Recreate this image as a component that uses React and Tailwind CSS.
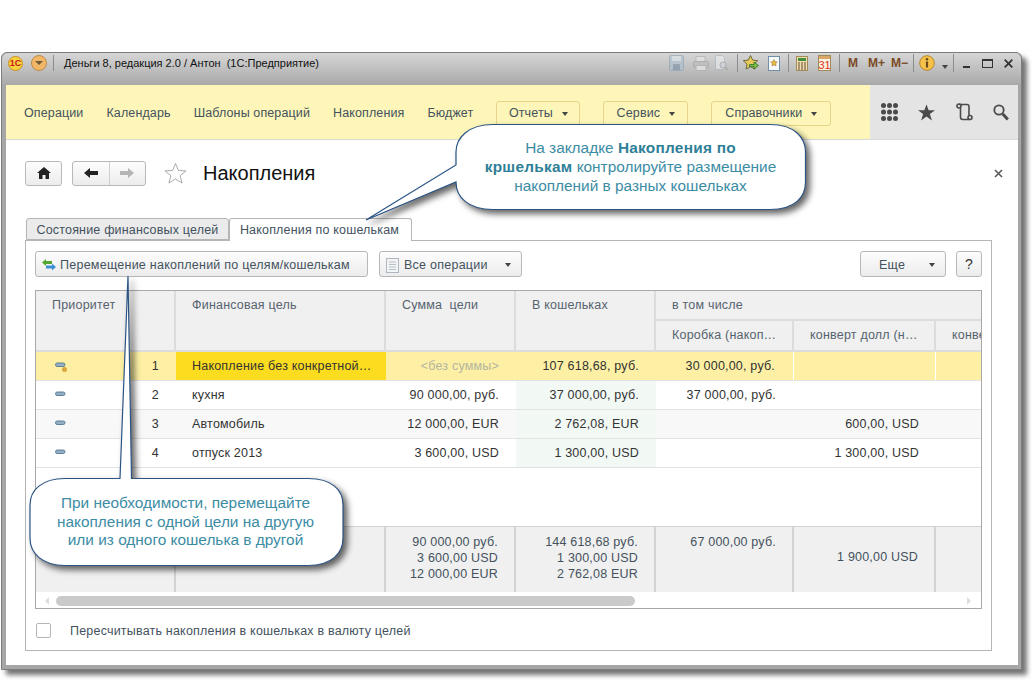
import React from "react";

const arial = "font-['Liberation_Sans',Arial,sans-serif]";

function Caret({ className = "" }) {
  return <span className={`inline-block w-0 h-0 border-x-[3px] border-x-transparent border-t-[4px] border-t-[#444] ${className}`} />;
}

function Sep({ className = "" }) {
  return <span className={`w-px h-[18px] bg-[#8d8d8d] ${className}`} />;
}

function TitleIcons() {
  return (
    <div className="flex items-center h-[24px] text-[#7b4a24]">
      {/* save / print / preview, greyed out */}
      <svg width="60" height="16" viewBox="0 0 60 16" className="opacity-55">
        <rect x=".5" y=".5" width="14" height="15" rx="1" fill="#a9c0d2" stroke="#7f9bb0" />
        <rect x="3" y="1" width="9" height="5" fill="#dfe8ee" />
        <rect x="4" y="9" width="7" height="6" fill="#6f8ba0" />
        <rect x="27" y="1.500" width="9" height="5" fill="#eee" stroke="#aaa" />
        <rect x="24.500" y="6.500" width="15" height="6" rx="1" fill="#b9b9b9" stroke="#999" />
        <rect x="27" y="10.500" width="10" height="5" fill="#f3f3f3" stroke="#aaa" />
        <path d="M46.500 .5h7l2 2v12h-9z" fill="#eef2f5" stroke="#a5b4c0" />
        <circle cx="54" cy="10" r="3" fill="#dde" stroke="#999" />
        <path d="M56 12l3 3" stroke="#999" strokeWidth="1.500" />
      </svg>
      <Sep className="ml-[8px] mr-[5px]" />
      <svg width="16" height="16" viewBox="0 0 16 16">
        <path d="M7.500 .5l2.200 4.600 5 .6-3.700 3.400.9 5L7.500 11.700 3.100 14.100l.9-5L.3 5.700l5-.6z" fill="#e8c95c" stroke="#6d6a3a" />
        <path d="M6.500 9.500h4.500V7l4.500 3.500L11 14v-2.500H6.500z" fill="#7cc242" stroke="#2f6f2a" strokeWidth=".8" />
      </svg>
      <svg width="12" height="15" viewBox="0 0 12 15" className="ml-[9px]">
        <rect x=".5" y=".5" width="11" height="14" fill="#f7f9fb" stroke="#6f8fa8" />
        <path d="M6 3.500l1 2.200 2.400.3-1.800 1.600.5 2.400L6 8.800l-2.100 1.200.5-2.400L2.600 6l2.400-.3z" fill="#e9b93c" stroke="#8a6d25" strokeWidth=".5" />
      </svg>
      <Sep className="ml-[8px] mr-[7px]" />
      <svg width="12" height="15" viewBox="0 0 12 15">
        <rect x=".5" y=".5" width="11" height="14" fill="#f3dcae" stroke="#a08a5a" />
        <rect x="2" y="2" width="8" height="3" fill="#3f8f3f" />
        <path d="M2 7h2M5 7h2M8 7h2M2 9h2M5 9h2M8 9h2M2 11h2M5 11h2M8 11h2M2 13h2M5 13h2M8 13h2" stroke="#5a4a30" />
      </svg>
      <svg width="13" height="16" viewBox="0 0 13 16" className="ml-[10px]">
        <rect x=".5" y=".5" width="12" height="15" fill="#fbf3e2" stroke="#a08a5a" />
        <rect x="1" y="1" width="11" height="3" fill="#d9a869" />
        <text x="6.500" y="14" textAnchor="middle" fontSize="11" fontFamily="Liberation Sans" fill="#e0301e">31</text>
      </svg>
      <Sep className="ml-[8px] mr-[8px]" />
      <span className="text-[12px] font-bold w-[20px]">M</span>
      <span className="text-[12px] font-bold w-[23px]">M+</span>
      <span className="text-[12px] font-bold w-[22px]">M−</span>
      <Sep className="mr-[5px]" />
      <svg width="16" height="16" viewBox="0 0 16 16">
        <circle cx="8" cy="8" r="7.300" fill="#f4c24a" stroke="#b8862b" />
        <circle cx="8" cy="4.300" r="1.300" fill="#6b4a1e" />
        <rect x="6.900" y="6.500" width="2.200" height="6" fill="#6b4a1e" />
      </svg>
      <Caret className="ml-[7px] mt-[8px]" />
      <Sep className="ml-[5px] mr-[9px]" />
      <span className="w-[7px] h-[2px] bg-[#333] mt-[7px]" />
      <span className="w-[11px] h-[9px] border border-[#333] border-t-2 ml-[12px]" />
      <svg width="9" height="9" viewBox="0 0 9 9" className="ml-[11px]">
        <path d="M.7 .7l7.600 7.600M8.300 .7L.7 8.300" stroke="#333" strokeWidth="1.800" />
      </svg>
    </div>
  );
}

function NavLink({ children, className = "" }) {
  return <span className={`pt-[1px] text-[12.5px] tracking-[0.12px] text-[#44525e] whitespace-nowrap ${className}`}>{children}</span>;
}

function NavButton({ children, w }) {
  return (
    <div className={`h-[25px] pt-[1px] flex items-center justify-center gap-[9px] border border-[#e6d489] rounded-[3px] text-[12.5px] tracking-[0.12px] text-[#44525e] ${w}`}>
      {children}
      <Caret />
    </div>
  );
}

function SideIcons() {
  return (
    <div className="flex items-center">
      <svg width="17" height="18" viewBox="0 0 17 18" className="ml-[11px]">
        {[2.600, 9, 15.400].map((y) =>
          [2.500, 8.500, 14.500].map((x) => <circle key={`${x}-${y}`} cx={x} cy={y} r="2.500" fill="#4a4a4a" />)
        )}
      </svg>
      <svg width="17" height="17" viewBox="0 0 18 17" className="ml-[20px]">
        <path d="M9 0l2.300 6H18l-5.400 4 2.100 7L9 12.800 3.300 17l2.100-7L0 6h6.700z" fill="#4a4a4a" />
      </svg>
      <svg width="17" height="18" viewBox="0 0 17 18" fill="none" stroke="#4a4a4a" strokeWidth="1.600" className="ml-[21px]">
        <path d="M3 1.500h8c1.500 0 2 1 2 2.200v8.800" />
        <path d="M4.500 4.500V14c0 1.500 1 2.500 2.200 2.500H14" />
        <circle cx="3" cy="3" r="2" />
        <circle cx="14" cy="14.500" r="2" />
      </svg>
      <svg width="16" height="17" viewBox="0 0 16 17" fill="none" stroke="#4a4a4a" className="ml-[20px]">
        <circle cx="6" cy="6" r="4.700" strokeWidth="1.800" />
        <path d="M9.800 10l5 5.500" strokeWidth="3" />
      </svg>
    </div>
  );
}

function Btn({ children, h = "h-[26px]", className = "" }) {
  return (
    <div className={`flex items-center border border-[#b8b8b8] rounded-[3px] bg-gradient-to-b from-[#fdfdfd] to-[#ececec] text-[12.5px] tracking-[0.25px] text-[#44525e] whitespace-nowrap ${h} ${className}`}>
      {children}
    </div>
  );
}

function FormHeader() {
  return (
    <div className="h-[78px] flex items-center shrink-0 pl-[19px] pr-[15px] pb-[12px]">
      <Btn h="h-[25px]" className="w-[37px] justify-center">
        <svg width="14" height="12" viewBox="0 0 14 12"><path d="M7 0L0 6h2v6h3.500V8h3v4H12V6h2z" fill="#222" /></svg>
      </Btn>
      <Btn h="h-[25px]" className="w-[74px] ml-[10px]">
        <span className="w-[37px] h-full flex items-center justify-center border-r border-[#cfcfcf]">
          <svg width="14" height="12" viewBox="0 0 14 12"><path d="M0 6l6-5v3h8v4H6v3z" fill="#222" /></svg>
        </span>
        <span className="w-[36px] flex justify-center">
          <svg width="14" height="12" viewBox="0 0 14 12"><path d="M14 6L8 1v3H0v4h8v3z" fill="#b5b5b5" /></svg>
        </span>
      </Btn>
      <svg width="23" height="22" viewBox="0 0 24 23" className="ml-[18px]">
        <path d="M12 1.500l3 7.400 8 .4-6.200 5 2.100 7.700-6.900-4.300-6.900 4.300 2.100-7.700L1 9.300l8-.4z" fill="#fff" stroke="#a5a5a5" />
      </svg>
      <span className="text-[20px] text-[#111] ml-[16px] leading-none">Накопления</span>
      <svg width="9" height="9" viewBox="0 0 9 9" className="ml-auto">
        <path d="M1 1l7 7M8 1L1 8" stroke="#555" strokeWidth="1.500" />
      </svg>
    </div>
  );
}

function Tabs() {
  return (
    <div className="flex h-[23px] ml-[1px] relative z-10 shrink-0 text-[12.5px] tracking-[0.18px] text-[#44525e]">
      <div className="w-[203px] h-[22px] pt-[2px] flex items-center justify-center bg-[#ebebeb] border border-[#b5b5b5] rounded-t-[3px]">Состояние финансовых целей</div>
      <div className="w-[183px] h-[23px] pt-[1px] pr-[2px] flex items-center justify-center bg-white border border-b-0 border-[#b5b5b5] rounded-t-[3px]">Накопления по кошелькам</div>
    </div>
  );
}

const head = "bg-[#f0f0f0] border-b-2 border-[#dcdcdc] text-[12.5px] tracking-[0.2px] text-[#56636f] whitespace-nowrap overflow-hidden";
const cell = "flex items-center pt-[1px] border-b border-[#e2e2e2] text-[12.5px] tracking-[0.2px] text-[#333] whitespace-nowrap overflow-hidden";

function PriorityIcon({ dot }) {
  return (
    <svg width="12" height="10" viewBox="0 0 12 10" className="ml-[19px]">
      <rect x=".5" y="1" width="9.500" height="3.500" rx="1.700" fill="#93afc5" stroke="#56768f" strokeWidth=".9" />
      {dot && <circle cx="9.500" cy="7.500" r="2.200" fill="#e0a93a" stroke="#b98a2c" strokeWidth=".5" />}
    </svg>
  );
}

const rows = [
  { n: 1, goal: "Накопление без конкретной…", sum: "<без суммы>", wallet: "107 618,68, руб.", a: "30 000,00, руб.", b: "" },
  { n: 2, goal: "кухня", sum: "90 000,00, руб.", wallet: "37 000,00, руб.", a: "37 000,00, руб.", b: "" },
  { n: 3, goal: "Автомобиль", sum: "12 000,00, EUR", wallet: "2 762,08, EUR", a: "", b: "600,00, USD" },
  { n: 4, goal: "отпуск 2013", sum: "3 600,00, USD", wallet: "1 300,00, USD", a: "", b: "1 300,00, USD" },
];

function Row({ r }) {
  const sel = r.n === 1;
  const bg = sel ? "bg-[#fdf0a5]" : r.n === 3 ? "bg-[#f8f8f8]" : "bg-white";
  const divider = sel ? "border-r border-r-white" : "";
  return (
    <>
      <div className={`${cell} ${bg}`}><PriorityIcon dot={sel} /></div>
      <div className={`${cell} ${bg} justify-end pr-[17px]`}>{r.n}</div>
      <div className={`${cell} pl-[16px] ${sel ? "bg-[#fcdc1f] text-[#111]" : bg}`}>{r.goal}</div>
      <div className={`${cell} ${bg} justify-end pr-[17px] ${sel ? "text-[#b4b4a0]" : ""}`}>{r.sum}</div>
      <div className={`${cell} justify-end pr-[17px] ${sel ? bg : "bg-[#f2f9f5]"}`}>{r.wallet}</div>
      <div className={`${cell} ${bg} justify-end pr-[18px] ${divider}`}>{r.a}</div>
      <div className={`${cell} ${bg} justify-end pr-[17px] ${divider}`}>{r.b}</div>
      <div className={`${cell} ${bg}`} />
    </>
  );
}

function Table() {
  const foot = "bg-[#f0f0f0] border-t border-[#d2d2d2] text-[12.5px] tracking-[0.2px] text-[#44525e] text-right pr-[16px] whitespace-nowrap";
  const line = "border-r-2";
  return (
    <div className="mt-[13px] mx-[9px] h-[320px] border border-[#a8a8a8] overflow-hidden grid grid-cols-[100px_40px_210px_130px_140px_138px_142px_45px] grid-rows-[30px_31px_29px_29px_29px_29px_58px_66px_17px]">
      <div className={`${head} ${line} col-span-2 row-span-2 pl-[16px] pt-[5px]`}>Приоритет</div>
      <div className={`${head} ${line} row-span-2 pl-[16px] pt-[5px]`}>Финансовая цель</div>
      <div className={`${head} ${line} row-span-2 pl-[16px] pt-[5px]`}>Сумма&nbsp; цели</div>
      <div className={`${head} ${line} row-span-2 pl-[16px] pt-[5px]`}>В кошельках</div>
      <div className={`${head} col-span-3 pl-[16px] flex items-center`}>в том числе</div>
      <div className={`${head} ${line} pl-[16px] flex items-center`}>Коробка (накоп…</div>
      <div className={`${head} ${line} pl-[16px] flex items-center`}>конверт долл (н…</div>
      <div className={`${head} pl-[16px] flex items-center`}>конверт</div>

      {rows.map((r) => <Row key={r.n} r={r} />)}

      <div className="col-span-8 bg-white" />

      <div className={`${foot} ${line} col-span-2`} />
      <div className={`${foot} ${line}`} />
      <div className={`${foot} ${line} flex flex-col justify-center pb-[4px] leading-[16px]`}>
        <span>90 000,00 руб.</span><span>3 600,00 USD</span><span>12 000,00 EUR</span>
      </div>
      <div className={`${foot} ${line} flex flex-col justify-center pb-[4px] leading-[16px]`}>
        <span>144 618,68 руб.</span><span>1 300,00 USD</span><span>2 762,08 EUR</span>
      </div>
      <div className={`${foot} ${line} pt-[6px]`}>67 000,00 руб.</div>
      <div className={`${foot} ${line} flex items-center justify-end pb-[4px]`}>1 900,00 USD</div>
      <div className={foot} />

      <div className="col-span-8 flex items-center bg-white pl-[9px] pr-[10px]">
        <span className="w-0 h-0 border-y-[4px] border-y-transparent border-r-[4px] border-r-[#ddd]" />
        <div className="ml-[7px] w-[579px] h-[10px] rounded-[5px] bg-[#cacaca]" />
        <span className="ml-auto w-0 h-0 border-y-[4px] border-y-transparent border-l-[4px] border-l-[#ddd]" />
      </div>
    </div>
  );
}

function Callouts() {
  return (
    <>
      <svg width="1034" height="680" className="absolute left-0 top-0 z-20 drop-shadow-[4px_4px_3px_rgba(0,0,0,0.6)]">
        <path
          d="M493 124.500H770C795 124.500 805.500 138 805.500 152V182C805.500 197 795 209.500 770 209.500H493C468 209.500 456 197 456 182L366 220L456 165V152C456 138 468 124.500 493 124.500Z"
          fill="#fff" stroke="#2a5484" strokeWidth="1.200"
        />
        <path
          d="M65 478.500H120L128 276L131.500 478.500H308C332 478.500 343 490 343 505V538C343 553 332 565.500 308 565.500H65C42 565.500 30 553 30 538V505C30 490 42 478.500 65 478.500Z"
          fill="#fff" stroke="#2a5484" strokeWidth="1.200"
        />
      </svg>
      <div className={`absolute z-30 left-[456px] top-[138px] w-[349px] text-center text-[15.400px] leading-[19px] text-[#3c8ca4] ${arial}`}>
        На закладке <b className="text-[#2f7f98] tracking-[0.25px]">Накопления по</b><br />
        <b className="text-[#2f7f98] tracking-[0.25px]">кршелькам</b> контролируйте размещение<br />
        накоплений в разных кошельках
      </div>
      <div className={`absolute z-30 left-[30px] top-[494px] w-[313px] -ml-px text-center text-[15.400px] leading-[18.500px] text-[#3c8ca4] ${arial}`}>
        При необходимости, перемещайте<br />
        накопления с одной цели на другую<br />
        или из одного кошелька в другой
      </div>
    </>
  );
}

export default function App() {
  return (
    <div className={`relative w-[1034px] h-[680px] bg-white overflow-hidden ${arial}`}>
      <div className="pt-[52px] pl-[1px]">
        <div className="w-[1021px] h-[618px] flex flex-col rounded-t-[6px] border border-[#7d7d7d] bg-[#a6a6a6] shadow-[5px_5px_5px_rgba(0,0,0,0.55)] pl-[4px] pr-[3px] pb-[4px]">
          <div className="h-[32px] shrink-0 -ml-[4px] -mr-[3px] pl-[6px] pr-[8px] pb-[12px] rounded-t-[6px] flex items-center bg-gradient-to-b from-[#d6d6d6] to-[#a9a9a9]">
            <span className="w-[15px] h-[15px] rounded-full bg-[#f7d23c] border border-[#c98f22] text-[9px] font-bold text-[#c8141e] flex items-center justify-center leading-none">1С</span>
            <span className="w-[16px] h-[16px] rounded-full bg-[#f2b766] border border-[#b98a4a] flex items-center justify-center ml-[8px]">
              <span className="w-0 h-0 border-x-[4px] border-x-transparent border-t-[4px] border-t-[#6f5a3a]" />
            </span>
            <span className="w-px h-[16px] bg-[#8d8d8d] ml-[6px]" />
            <span className="text-[11px] text-[#111] ml-[10px] whitespace-pre">Деньги 8, редакция 2.0 / Антон  (1С:Предприятие)</span>
            <div className="ml-auto"><TitleIcons /></div>
          </div>

          <div className="flex h-[55px] shrink-0">
            <div className="flex-1 flex items-center bg-[#fdf6b8] pl-[18px] pt-[2px] border-b border-[#d8d8d8]">
              <NavLink>Операции</NavLink>
              <NavLink className="ml-[23px]">Календарь</NavLink>
              <NavLink className="ml-[23px]">Шаблоны операций</NavLink>
              <NavLink className="ml-[23px]">Накопления</NavLink>
              <NavLink className="ml-[23px]">Бюджет</NavLink>
              <div className="ml-[23px]"><NavButton w="w-[84px]">Отчеты</NavButton></div>
              <div className="ml-[23px]"><NavButton w="w-[85px]">Сервис</NavButton></div>
              <div className="ml-[23px]"><NavButton w="w-[120px]">Справочники</NavButton></div>
            </div>
            <div className="w-[148px] flex items-center bg-[#e4e4e4] border-b border-[#d8d8d8]"><SideIcons /></div>
          </div>

          <div className="flex-1 min-h-0 flex flex-col bg-white">
            <FormHeader />
            <div className="ml-[19px] mr-[26px] flex flex-col">
              <Tabs />
              <div className="h-[411px] -mt-px border border-[#b5b5b5] flex flex-col">
                <div className="flex items-center gap-[10px] pt-[10px] px-[9px]">
                  <Btn className="w-[333px] pl-[6px] pt-[2px]">
                    <svg width="14" height="12" viewBox="0 0 14 12" className="mr-[4px]">
                      <path d="M0 3.500L4 0v2h6v3H4v2z" fill="#55a630" />
                      <path d="M14 8L10 4.500v2H4v3h6v2z" fill="#3d8fd0" />
                    </svg>
                    Перемещение накоплений по целям/кошелькам
                  </Btn>
                  <Btn className="w-[143px] ml-[1px] pl-[6px] pt-[2px]">
                    <svg width="13" height="15" viewBox="0 0 13 15" className="mr-[5px]">
                      <rect x=".5" y=".5" width="12" height="14" fill="#f2f4f6" stroke="#aeb7bf" />
                      <path d="M3 4h7M3 6.500h7M3 9h7M3 11.500h7" stroke="#b8c0c8" />
                    </svg>
                    Все операции
                    <Caret className="ml-auto mr-[10px]" />
                  </Btn>
                  <Btn className="w-[86px] ml-auto pt-[2px]">
                    <span className="ml-[18px]">Еще</span>
                    <Caret className="ml-auto mr-[10px]" />
                  </Btn>
                  <Btn className="w-[26px] justify-center">
                    <span className="text-[14px] text-[#333]">?</span>
                  </Btn>
                </div>
                <Table />
                <div className="flex items-center h-[41px] pl-[10px] pt-[2px]">
                  <span className="w-[15px] h-[15px] border border-[#b5b5b5] rounded-[2px]" />
                  <span className="ml-[19px] pt-[2px] text-[12.5px] tracking-[0.2px] text-[#44525e]">Пересчитывать накопления в кошельках в валюту целей</span>
                </div>
              </div>
            </div>
          </div>
        </div>
      </div>
      <Callouts />
    </div>
  );
}
